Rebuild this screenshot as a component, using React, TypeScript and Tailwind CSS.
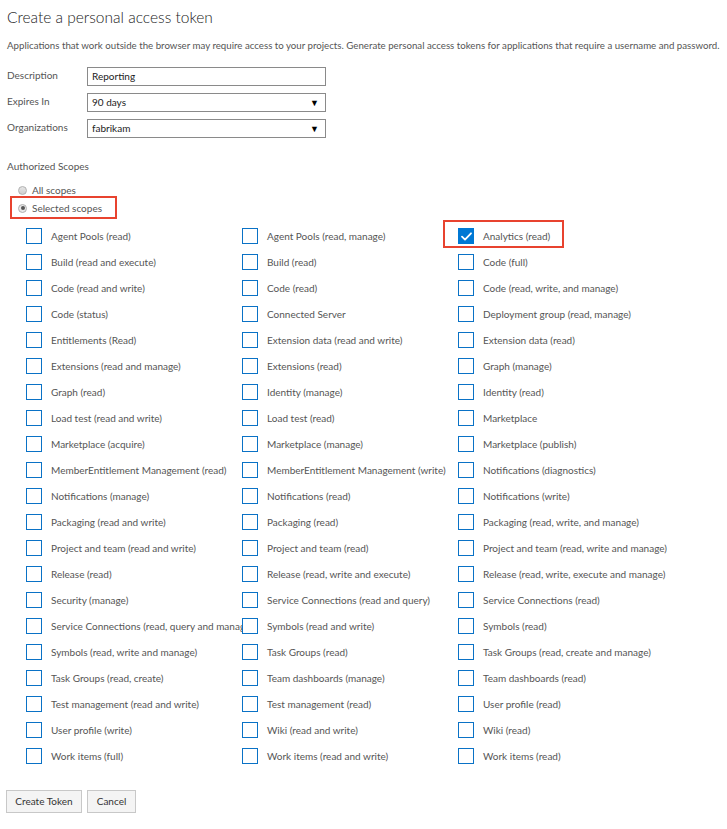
import React from 'react';

const col1 = [
  'Agent Pools (read)',
  'Build (read and execute)',
  'Code (read and write)',
  'Code (status)',
  'Entitlements (Read)',
  'Extensions (read and manage)',
  'Graph (read)',
  'Load test (read and write)',
  'Marketplace (acquire)',
  'MemberEntitlement Management (read)',
  'Notifications (manage)',
  'Packaging (read and write)',
  'Project and team (read and write)',
  'Release (read)',
  'Security (manage)',
  'Service Connections (read, query and manage)',
  'Symbols (read, write and manage)',
  'Task Groups (read, create)',
  'Test management (read and write)',
  'User profile (write)',
  'Work items (full)',
];

const col2 = [
  'Agent Pools (read, manage)',
  'Build (read)',
  'Code (read)',
  'Connected Server',
  'Extension data (read and write)',
  'Extensions (read)',
  'Identity (manage)',
  'Load test (read)',
  'Marketplace (manage)',
  'MemberEntitlement Management (write)',
  'Notifications (read)',
  'Packaging (read)',
  'Project and team (read)',
  'Release (read, write and execute)',
  'Service Connections (read and query)',
  'Symbols (read and write)',
  'Task Groups (read)',
  'Team dashboards (manage)',
  'Test management (read)',
  'Wiki (read and write)',
  'Work items (read and write)',
];

const col3 = [
  'Analytics (read)',
  'Code (full)',
  'Code (read, write, and manage)',
  'Deployment group (read, manage)',
  'Extension data (read)',
  'Graph (manage)',
  'Identity (read)',
  'Marketplace',
  'Marketplace (publish)',
  'Notifications (diagnostics)',
  'Notifications (write)',
  'Packaging (read, write, and manage)',
  'Project and team (read, write and manage)',
  'Release (read, write, execute and manage)',
  'Service Connections (read)',
  'Symbols (read)',
  'Task Groups (read, create and manage)',
  'Team dashboards (read)',
  'User profile (read)',
  'Wiki (read)',
  'Work items (read)',
];

const Scope: React.FC<{ label: string; checked?: boolean; highlight?: boolean }> = ({ label, checked, highlight }) => (
  <div className="relative flex h-[26px] items-center whitespace-nowrap">
    {highlight && (
      <div className="absolute left-[-15px] top-[-3px] h-[28px] w-[121px] border-2 border-[#e8432f]" />
    )}
    {checked ? (
      <div className="flex h-4 w-4 shrink-0 items-center justify-center bg-[#0078d4]">
        <svg width="11" height="9" viewBox="0 0 11 9" fill="none">
          <path d="M1 4.6l3 3L10 1.3" stroke="#fff" strokeWidth="1.8" strokeLinecap="round" strokeLinejoin="round" />
        </svg>
      </div>
    ) : (
      <div className="h-4 w-4 shrink-0 border border-[#0a72c6] bg-white" />
    )}
    <span className="ml-[9px] text-[10px] text-[#555]">{label}</span>
  </div>
);

const Field: React.FC<{ label: string; value: string; select?: boolean }> = ({ label, value, select }) => (
  <div className="flex h-[26px] items-start">
    <div className="w-[80px] pt-[1px] text-[10px] text-[#555]">{label}</div>
    <div className="flex h-[19px] w-[239px] items-center justify-between border border-[#8a8a8a] bg-white pl-[4px] pr-[6px] text-[10px] text-[#222]">
      <span>{value}</span>
      {select && <span className="text-[9px] leading-none text-black">▼</span>}
    </div>
  </div>
);

export default function App() {
  return (
    <div className="min-h-[829px] w-[727px] overflow-hidden bg-white pl-[7px] pt-[7px] font-['Lato',sans-serif]">
      <h1 className="text-[15.5px] font-light leading-[20px] text-[#222]">Create a personal access token</h1>
      <p className="mt-[11px] whitespace-nowrap text-[9.7px] leading-[14px] text-[#555]">
        Applications that work outside the browser may require access to your projects. Generate personal access tokens for applications that require a username and password.
      </p>

      <div className="mt-[15px]">
        <Field label="Description" value="Reporting" />
        <Field label="Expires In" value="90 days" select />
        <Field label="Organizations" value="fabrikam" select />
      </div>

      <div className="mt-[14px] text-[10px] leading-[14px] text-[#555]">Authorized Scopes</div>

      <div className="mt-[8px] pl-[11px]">
        <div className="flex h-[18px] items-center">
          <span className="h-[9px] w-[9px] rounded-full border border-[#b0b0b0] bg-gradient-to-b from-[#e6e6e6] to-[#cfcfcf]" />
          <span className="ml-[5px] text-[10px] text-[#555]">All scopes</span>
        </div>
        <div className="relative flex h-[18px] items-center">
          <div className="absolute left-[-8px] top-[-3px] h-[23px] w-[107px] border-2 border-[#e8432f]" />
          <span className="flex h-[9px] w-[9px] items-center justify-center rounded-full border border-[#b0b0b0] bg-[#e8e8e8]">
            <span className="h-[4px] w-[4px] rounded-full bg-[#555]" />
          </span>
          <span className="ml-[5px] text-[10px] text-[#555]">Selected scopes</span>
        </div>
      </div>

      <div className="mt-[6px] grid grid-cols-[216px_216px_216px] pl-[19px]">
        {col1.map((_, i) => (
          <React.Fragment key={i}>
            <Scope label={col1[i]} />
            <Scope label={col2[i]} />
            <Scope label={col3[i]} checked={i === 0} highlight={i === 0} />
          </React.Fragment>
        ))}
      </div>

      <div className="mt-[21px] flex gap-[5px]">
        <button className="-ml-[1px] h-[23px] w-[76px] border border-[#c8c8c8] bg-[#f4f4f4] text-[10px] text-[#333]">Create Token</button>
        <button className="h-[23px] w-[49px] border border-[#c8c8c8] bg-[#f4f4f4] text-[10px] text-[#333]">Cancel</button>
      </div>
    </div>
  );
}
